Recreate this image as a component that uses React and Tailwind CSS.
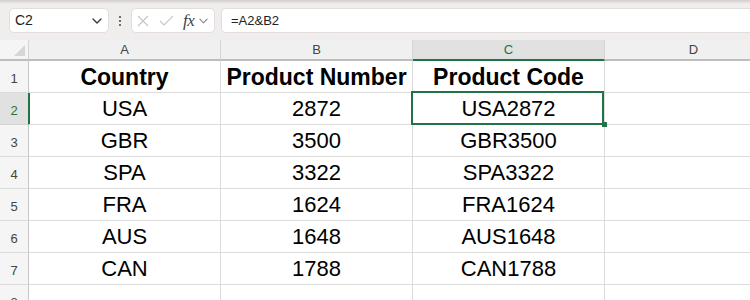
import React from "react";

const data = [
  ["USA", "2872", "USA2872"],
  ["GBR", "3500", "GBR3500"],
  ["SPA", "3322", "SPA3322"],
  ["FRA", "1624", "FRA1624"],
  ["AUS", "1648", "AUS1648"],
  ["CAN", "1788", "CAN1788"],
];

function Chevron({ color = "#333", w = 10 }) {
  return (
    <svg width={w} height="6" viewBox="0 0 10 6" fill="none">
      <path d="M1 1l4 4 4-4" stroke={color} strokeWidth="1.3" strokeLinecap="round" strokeLinejoin="round" />
    </svg>
  );
}

function RowHead({ n, selected }) {
  return (
    <div
      className={
        "w-[29px] shrink-0 border-r border-b flex items-end justify-center pb-[6px] text-[13px] leading-[15px] " +
        (selected
          ? "bg-[#e1e1e1] border-r-[#217346] border-b-[#d4d4d4] text-[#217346] shadow-[1px_0_0_#217346]"
          : "bg-[#f5f5f5] border-r-[#c6c6c6] border-b-[#dcdcdc] text-[#444]")
      }
    >
      {n}
    </div>
  );
}

function Cell({ children, bold, selected, last }) {
  return (
    <div
      className={
        "relative shrink-0 border-r border-b border-[#dcdcdc] text-center text-black " +
        (last ? "w-[178px]" : "w-[192px]")
      }
    >
      {bold ? (
        <div className="pt-[2px] text-[23px] leading-[29px] font-bold">{children}</div>
      ) : (
        <div className="text-[22px] leading-[31px]">{children}</div>
      )}
      {selected && (
        <>
          <div className="absolute z-10 left-[-2px] top-[-2px] right-0 bottom-[-1px] border-2 border-[#217346]" />
          <div className="absolute z-10 right-[-3px] bottom-[-3px] w-[5px] h-[5px] bg-[#217346]" />
        </>
      )}
    </div>
  );
}

export default function App() {
  return (
    <div className="w-[750px] h-[300px] overflow-hidden bg-white font-['Liberation_Sans',Arial,sans-serif]">
      {/* Toolbar */}
      <div className="h-[40px] bg-[#f0eded] flex flex-col">
        <div className="h-[4px] bg-gradient-to-b from-[#d3cfcf] to-[#f0eded]" />
        <div className="flex items-start pt-[4px] pl-[9px]">
          <div className="w-[100px] h-[25px] bg-white border border-[#e2dede] rounded-[5px] flex items-center justify-between pl-[5px] pr-[6px]">
            <span className="text-[14px] text-[#222]">C2</span>
            <Chevron color="#333" />
          </div>
          <div className="w-[22px] h-[25px] flex flex-col items-center justify-center gap-[2px]">
            <div className="w-[2px] h-[2px] bg-[#444] rounded-full" />
            <div className="w-[2px] h-[2px] bg-[#444] rounded-full" />
            <div className="w-[2px] h-[2px] bg-[#444] rounded-full" />
          </div>
          <div className="w-[84px] h-[25px] bg-white border border-[#e2dede] rounded-[5px] flex items-center pl-[5px]">
            <svg width="12" height="12" viewBox="0 0 12 12" fill="none">
              <path d="M1 1l10 10M11 1L1 11" stroke="#c4c4c4" strokeWidth="1.1" />
            </svg>
            <svg className="ml-[10px]" width="15" height="11" viewBox="0 0 15 11" fill="none">
              <path d="M1 6l4 4 9-9" stroke="#c8c8c8" strokeWidth="1.1" />
            </svg>
            <span className="ml-[9px] font-['Liberation_Serif',serif] italic text-[17px] leading-none text-[#444] tracking-[-0.5px]">
              fx
            </span>
            <span className="ml-[5px] flex">
              <Chevron color="#8a8a8a" w={9} />
            </span>
          </div>
          <div className="ml-[6px] flex-1 h-[25px] bg-white border border-r-0 border-[#e2dede] rounded-l-[5px] flex items-center pl-[9px]">
            <span className="text-[13px] text-[#222]">=A2&amp;B2</span>
          </div>
        </div>
      </div>

      {/* Column headers */}
      <div className="flex h-[21px]">
        <div className="w-[29px] shrink-0 bg-[#f5f5f5] border-r border-r-[#d4d4d4] border-b-2 border-b-[#bdbdbd] flex items-end justify-end pr-[3px] pb-[3px]">
          <svg width="11" height="11" viewBox="0 0 11 11">
            <path d="M11 0V11H0Z" fill="#d6d6d6" />
          </svg>
        </div>
        {["A", "B", "C", "D"].map((c) => (
          <div
            key={c}
            className={
              "shrink-0 border-r border-r-[#d4d4d4] border-b-2 flex items-center justify-center pt-[1px] text-[13px] " +
              (c === "D" ? "w-[178px] " : "w-[192px] ") +
              (c === "C"
                ? "bg-[#e1e1e1] border-b-[#217346] text-[#217346]"
                : "bg-[#f0f0f0] border-b-[#bdbdbd] text-[#444]")
            }
          >
            {c}
          </div>
        ))}
      </div>

      {/* Row 1 */}
      <div className="flex h-[32px]">
        <RowHead n={1} />
        <Cell bold>Country</Cell>
        <Cell bold>Product Number</Cell>
        <Cell bold>Product Code</Cell>
        <Cell last />
      </div>

      {data.map((r, i) => (
        <div key={i} className="flex h-[32px]">
          <RowHead n={i + 2} selected={i === 0} />
          <Cell>{r[0]}</Cell>
          <Cell>{r[1]}</Cell>
          <Cell selected={i === 0}>{r[2]}</Cell>
          <Cell last />
        </div>
      ))}

      <div className="flex h-[32px]">
        <RowHead n={8} />
        <Cell />
        <Cell />
        <Cell />
        <Cell last />
      </div>
    </div>
  );
}
